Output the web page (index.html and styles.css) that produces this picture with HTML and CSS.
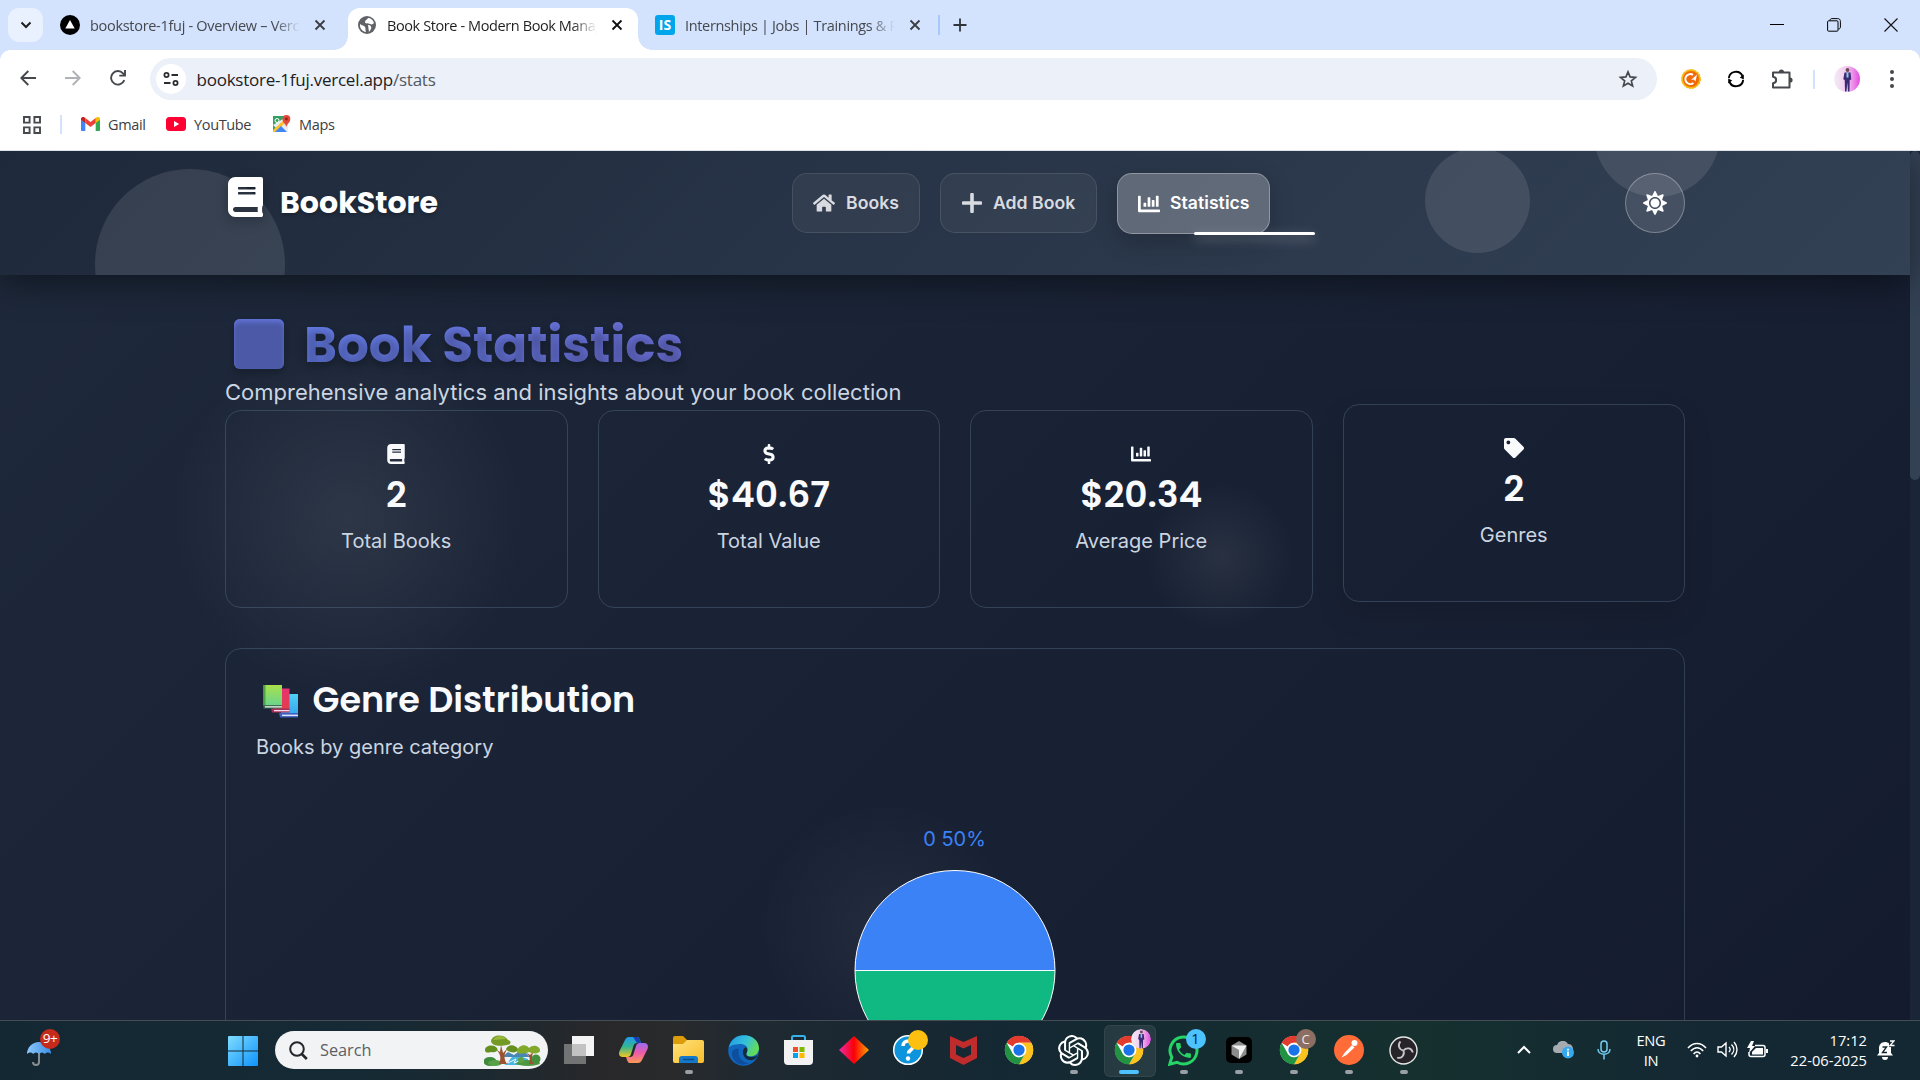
FILE: index.html
```html
<!DOCTYPE html>
<html lang="en">
<head>
<meta charset="utf-8">
<title>Book Store - Modern Book Management</title>
<link rel="stylesheet" href="styles.css">
</head>
<body>
<svg class="defs" aria-hidden="true">
  <defs>
    <linearGradient id="gWin" x1="0" y1="0" x2="1" y2="1"><stop offset="0" stop-color="#7fdcff"/><stop offset="1" stop-color="#0f93fb"/></linearGradient>
    <linearGradient id="gFold" x1="0" y1="0" x2="1" y2="1"><stop offset="0" stop-color="#ffe27a"/><stop offset="1" stop-color="#f8bd2c"/></linearGradient>
    <linearGradient id="gDia"><stop offset="0" stop-color="#ee2aa8"/><stop offset=".5" stop-color="#fb0006"/><stop offset="1" stop-color="#ffa600"/></linearGradient>
    <linearGradient id="gEdge" x1="0" y1="0" x2="1" y2=".4"><stop offset="0" stop-color="#1d9be6"/><stop offset=".6" stop-color="#35c1d8"/><stop offset="1" stop-color="#62dc5a"/></linearGradient>
    <linearGradient id="gCopA" x1="0" y1="0" x2="0" y2="1"><stop offset="0" stop-color="#1f9cf0"/><stop offset=".5" stop-color="#35b68e"/><stop offset="1" stop-color="#f7c821"/></linearGradient>
    <linearGradient id="gCopB" x1="0" y1="0" x2="0" y2="1"><stop offset="0" stop-color="#9a6cf5"/><stop offset=".5" stop-color="#ee5ba6"/><stop offset="1" stop-color="#fb9a55"/></linearGradient>
    <linearGradient id="gBookA" x1="0" y1="0" x2="0" y2="1"><stop offset="0" stop-color="#a9e04a"/><stop offset="1" stop-color="#6ad58e"/></linearGradient>
    <linearGradient id="gBookB" x1="0" y1="0" x2="0" y2="1"><stop offset="0" stop-color="#e8316f"/><stop offset="1" stop-color="#e33f4e"/></linearGradient>
    <linearGradient id="gBookC" x1="0" y1="0" x2="0" y2="1"><stop offset="0" stop-color="#4fd0f4"/><stop offset="1" stop-color="#36a4ee"/></linearGradient>
    <linearGradient id="gUmb"><stop offset="0" stop-color="#8cc8fb"/><stop offset="1" stop-color="#3c8fe6"/></linearGradient>
    <linearGradient id="gPink"><stop offset="0" stop-color="#f3edf5"/><stop offset=".5" stop-color="#f2c8f0"/><stop offset="1" stop-color="#e44be0"/></linearGradient>
    <symbol id="x" viewBox="0 0 12 12"><path d="M1.5 1.5l9 9M10.500 1.500l-9 9" stroke="currentColor" stroke-width="1.8" fill="none"/></symbol>
    <symbol id="book" viewBox="0 0 448 512"><path fill="currentColor" d="M448 360V24c0-13.300-10.700-24-24-24H96C43 0 0 43 0 96v320c0 53 43 96 96 96h328c13.300 0 24-10.700 24-24v-16c0-7.500-3.500-14.300-8.900-18.700-4.200-15.400-4.200-59.300 0-74.700 5.400-4.300 8.900-11.100 8.900-18.600zM128 134c0-3.300 2.700-6 6-6h212c3.300 0 6 2.700 6 6v20c0 3.300-2.700 6-6 6H134c-3.300 0-6-2.700-6-6v-20zm0 64c0-3.300 2.700-6 6-6h212c3.300 0 6 2.700 6 6v20c0 3.300-2.700 6-6 6H134c-3.300 0-6-2.700-6-6v-20zm253.400 250H96c-17.700 0-32-14.300-32-32 0-17.600 14.400-32 32-32h285.400c-1.900 17.100-1.900 46.900 0 64z"/></symbol>
    <symbol id="chart" viewBox="0 0 512 512"><path fill="currentColor" d="M332.800 320h38.400c6.400 0 12.800-6.400 12.800-12.800V172.800c0-6.400-6.400-12.800-12.800-12.800h-38.400c-6.400 0-12.800 6.400-12.800 12.800v134.400c0 6.400 6.400 12.800 12.800 12.800zm96 0h38.400c6.400 0 12.800-6.400 12.800-12.800V76.800c0-6.400-6.400-12.800-12.800-12.800h-38.400c-6.400 0-12.800 6.400-12.800 12.800v230.400c0 6.400 6.400 12.800 12.800 12.800zm-288 0h38.400c6.400 0 12.800-6.400 12.800-12.800v-70.400c0-6.400-6.400-12.800-12.800-12.800h-38.400c-6.400 0-12.800 6.400-12.800 12.800v70.400c0 6.400 6.400 12.800 12.800 12.800zm96 0h38.400c6.400 0 12.800-6.400 12.800-12.800V108.800c0-6.400-6.400-12.800-12.800-12.800h-38.400c-6.400 0-12.800 6.400-12.800 12.800v198.400c0 6.400 6.400 12.800 12.800 12.800zM496 384H64V80c0-8.840-7.160-16-16-16H16C7.160 64 0 71.160 0 80v336c0 17.670 14.330 32 32 32h464c8.840 0 16-7.160 16-16v-32c0-8.840-7.160-16-16-16z"/></symbol>
    <symbol id="chrome" viewBox="0 0 48 48">
      <circle cx="24" cy="24" r="22.500" fill="#fff"/>
      <path d="M24 1a23 23 0 0 1 19.900 11.500H24a11.500 11.500 0 0 0-10 5.800L4.100 12.500A23 23 0 0 1 24 1z" fill="#e33b2e"/>
      <path d="M43.900 12.500A23 23 0 0 1 24 47l10-17.250a11.500 11.500 0 0 0 0-11.500l-10-5.750z" fill="#fcc31e"/>
      <path d="M24 47A23 23 0 0 1 4.100 12.500L14 29.750a11.500 11.500 0 0 0 20 0z" fill="#229342"/>
      <circle cx="24" cy="24" r="11.500" fill="#fff"/><circle cx="24" cy="24" r="9" fill="#1a73e8"/>
    </symbol>
    <symbol id="avatar" viewBox="0 0 26 26">
      <circle cx="13" cy="13" r="13" fill="url(#gPink)"/>
      <circle cx="13.500" cy="4" r="1.900" fill="#6b4a55"/><path d="M10.500 6.500h6l.8 7-1.600.5-.2 11.500h-1.500l-.7-9-.8 9H11l-.3-11.500-1.400-.8z" fill="#3a2a72"/><path d="M12.500 6.500h2v5h-2z" fill="#8fc6ea"/>
    </symbol>
  </defs>
</svg>

<div class="browser">
  <div class="tabstrip">
    <button class="tab-search"><svg width="12" height="12" viewBox="0 0 12 12"><path d="M1.500 3.500L6 8l4.500-4.500" fill="none" stroke="#1f1f1f" stroke-width="2"/></svg></button>
    <div class="tab tab-first">
      <svg width="20" height="20" viewBox="0 0 20 20"><circle cx="10" cy="10" r="10" fill="#000"/><path d="M10 5l4.700 8.500H5.300z" fill="#fff"/></svg>
      <span class="tab-title t1">bookstore-1fuj - Overview – Vercel</span>
      <svg class="tab-x" width="12" height="12"><use href="#x"/></svg>
    </div>
    <div class="tab tab-active">
      <svg width="18" height="18" viewBox="0 0 18 18"><circle cx="9" cy="9" r="9" fill="#5f6368"/><path d="M2 8c2 2 4 1 5 3s0 3 1 5c-4-.5-6.500-4-6-8zM10 2c-1 2-3 2-3 4s3 1 5 2 3 0 4-1c-.8-3-3-5-6-5zM10 9c2 0 4 1 3 4l-2 3" fill="#fff"/></svg>
      <span class="tab-title t2">Book Store - Modern Book Management</span>
      <svg class="tab-x dark" width="12" height="12"><use href="#x"/></svg>
    </div>
    <div class="tab tab-last">
      <span class="favicon-is">IS</span>
      <span class="tab-title t3">Internships | Jobs | Trainings &amp; Placement</span>
      <svg class="tab-x" width="12" height="12"><use href="#x"/></svg>
    </div>
    <i class="tab-sep"></i>
    <svg class="new-tab" width="14" height="14" viewBox="0 0 14 14"><path d="M7 .5v13M.5 7h13" stroke="#30343a" stroke-width="1.800"/></svg>
    <div class="window-controls">
      <svg width="14" height="14" viewBox="0 0 14 14"><path d="M0 6.500h14" stroke="#000"/></svg>
      <svg width="14" height="14" viewBox="0 0 14 14" fill="none" stroke="#000"><rect x=".6" y="2.800" width="10.400" height="10.400" rx="1"/><path d="M3 2.500C3 1 4 .6 5 .6h5.500c2 0 2.900 1 2.900 2.900V9c0 1-.5 2-2 2"/></svg>
      <svg width="14" height="14" viewBox="0 0 14 14"><path d="M.5.5l13 13M13.500.5l-13 13" stroke="#111" stroke-width="1.100"/></svg>
    </div>
  </div>
  <div class="toolbar">
    <svg class="nav-ic" width="16" height="16" viewBox="0 0 16 16"><path d="M16 8H1.500M8.300 1L1.300 8l7 7" fill="none" stroke="#45484c" stroke-width="1.900"/></svg>
    <svg class="nav-ic" width="16" height="16" viewBox="0 0 16 16"><path d="M0 8h14.500M7.700 1l7 7-7 7" fill="none" stroke="#b0b1b4" stroke-width="1.900"/></svg>
    <svg class="nav-ic" width="16" height="16" viewBox="0 0 16 16"><path d="M14.300 10.200A6.800 6.800 0 1 1 13 3.300l1.500 1.700M15 0v5.600H9.300" fill="none" stroke="#45484c" stroke-width="1.900"/></svg>
    <div class="omnibox">
      <span class="site-info"><svg width="16" height="16" viewBox="0 0 16 16" fill="none" stroke="#2b2d30" stroke-width="1.800"><circle cx="3.500" cy="4" r="2.100"/><path d="M8.500 4H15M1 12h6.500"/><circle cx="12.500" cy="12" r="2.100"/></svg></span>
      <span class="url">bookstore-1fuj.vercel.app<em>/stats</em></span>
      <svg width="20" height="20" viewBox="0 0 24 24"><path d="M12 3.500l2.500 6 6.500.5-5 4.200 1.600 6.300L12 17.100l-5.600 3.400L8 14.200 3 10l6.500-.5z" fill="none" stroke="#45484c" stroke-width="2"/></svg>
    </div>
    <div class="extensions">
      <svg width="20" height="20" viewBox="0 0 20 20"><circle cx="10" cy="10" r="9.500" fill="#f3b912" stroke="#f3b912" stroke-dasharray="2 1"/><circle cx="10" cy="10" r="8" fill="#f06a0c"/><path d="M12 5.800A5 5 0 1 0 12.500 14" fill="none" stroke="#fff" stroke-width="2"/><path d="M10 11l6-5.500-1.500 7-1.700-2z" fill="#fff"/></svg>
      <svg width="18" height="18" viewBox="0 0 18 18" fill="none" stroke="#000" stroke-width="1.900"><path d="M1.800 8A7.200 7.200 0 0 1 15.500 6M16.200 10A7.200 7.200 0 0 1 2.500 12"/><path d="M16.800 4.500v5l-4-2zM1.200 13.500v-5l4 2z" fill="#000" stroke="none"/></svg>
      <svg width="23" height="23" viewBox="0 0 23 23"><path d="M2 4.500h16.500v15H2v-4.300c4.200-.5 4.200-6 0-6.500z" fill="none" stroke="#45484c" stroke-width="2" stroke-linejoin="round"/><path d="M7.800 4a2.600 2.600 0 0 1 5.200 0zM19 9.400a2.600 2.600 0 0 1 0 5.200z" fill="#45484c"/></svg>
      <i class="tool-sep"></i>
      <svg class="av" width="26" height="26"><use href="#avatar"/></svg>
      <svg width="4" height="18" viewBox="0 0 4 18" fill="#45484c"><circle cx="2" cy="2" r="2"/><circle cx="2" cy="9" r="2"/><circle cx="2" cy="16" r="2"/></svg>
    </div>
  </div>
  <div class="bookmarks">
    <svg class="apps" width="18" height="18" viewBox="0 0 18 18" fill="none" stroke="#45484c" stroke-width="1.900"><path d="M1 1h5.600v5.600H1zM11.400 1H17v5.600h-5.600zM1 11.400h5.600V17H1zM11.400 11.400H17V17h-5.600z"/></svg>
    <i class="tool-sep"></i>
    <span class="bm gm"><svg width="19" height="14" viewBox="0 0 19 14"><path d="M0 2v11c0 .6.400 1 1 1h3.300V5.500z" fill="#4285f4"/><path d="M14.700 14H18c.6 0 1-.4 1-1V2l-4.300 3.500z" fill="#34a853"/><path d="M14.700 1v5L19 2.800V2c0-2-2.200-2.500-3.300-1.700z" fill="#fbbc04"/><path d="M4.300 6V1l5.200 4 5.200-4v5L9.500 10z" fill="#ea4335"/><path d="M0 2v.8L4.300 6V1L3.300.3C2.200-.5 0 0 0 2z" fill="#c5221f"/></svg>Gmail</span>
    <span class="bm yt"><svg width="20" height="14" viewBox="0 0 20 14"><rect width="20" height="14" rx="3.500" fill="#ff0033"/><path d="M8 4l5.200 3L8 10z" fill="#fff"/></svg>YouTube</span>
    <span class="bm mp"><svg width="19" height="18" viewBox="0 0 19 18"><path d="M1 1h15v16H1z" fill="#34a061"/><path d="M16 1v16H8L1 10z" fill="#e9edf0"/><path d="M1 15L14 3l2 2L4 17H1z" fill="#fbc02d"/><path d="M3 17l6-6 6 6z" fill="#4285f4"/><circle cx="5" cy="5.500" r="2" fill="none" stroke="#fff"/><path d="M14.300 12C13.500 8.500 10.500 7.500 10.500 4a3.900 3.900 0 0 1 7.800 0c0 3.500-3.200 4.500-4 8z" fill="#e4483b"/><circle cx="14.400" cy="4" r="1.400" fill="#8c1f18"/></svg>Maps</span>
  </div>
</div>

<div class="viewport">
  <div class="glow g1"></div><div class="glow g2"></div><div class="glow g3"></div>
  <div class="page">
    <header class="site-header">
      <div class="bubbles"><i class="b1"></i><i class="b2"></i><i class="b3"></i></div>
      <div class="header-row">
        <div class="logo"><svg width="35" height="40"><use href="#book"/></svg><span>BookStore</span></div>
        <nav class="nav">
          <a class="nav-books"><svg width="22" height="20" viewBox="0 0 576 512"><path fill="currentColor" d="M280.370 148.260L96 300.110V464a16 16 0 0 0 16 16l112.060-.29a16 16 0 0 0 15.920-16V368a16 16 0 0 1 16-16h64a16 16 0 0 1 16 16v95.640a16 16 0 0 0 16 16.050L464 480a16 16 0 0 0 16-16V300L295.670 148.260a12.190 12.190 0 0 0-15.300 0zM571.600 251.470L488 182.560V44.050a12 12 0 0 0-12-12h-56a12 12 0 0 0-12 12v72.610L318.470 43a48 48 0 0 0-61 0L4.340 251.470a12 12 0 0 0-1.600 16.900l25.500 31A12 12 0 0 0 45.150 301l235.220-193.740a12.190 12.190 0 0 1 15.300 0L530.900 301a12 12 0 0 0 16.900-1.600l25.500-31a12 12 0 0 0-1.700-16.930z"/></svg><span>Books</span></a>
          <a class="nav-add"><svg width="20" height="20" viewBox="0 0 20 20"><path d="M10 1.500v17M1.500 10h17" stroke="currentColor" stroke-width="3.600" stroke-linecap="round"/></svg><span>Add Book</span></a>
          <a class="nav-stats active"><svg width="22" height="22"><use href="#chart"/></svg><span>Statistics</span><i class="underline"></i></a>
        </nav>
        <button class="theme"><svg width="24" height="24" viewBox="0 0 512 512"><path fill="#fff" d="M256 160c-52.900 0-96 43.100-96 96s43.100 96 96 96 96-43.100 96-96-43.100-96-96-96zm246.400 80.500l-94.700-47.300 33.500-100.400c4.500-13.600-8.400-26.500-21.900-21.900l-100.400 33.500-47.400-94.800c-6.400-12.800-24.600-12.800-31 0l-47.300 94.700L92.700 70.800c-13.600-4.500-26.500 8.400-21.900 21.900l33.500 100.400-94.700 47.400c-12.800 6.400-12.800 24.600 0 31l94.700 47.300-33.500 100.500c-4.500 13.600 8.400 26.500 21.900 21.900l100.400-33.500 47.300 94.700c6.400 12.800 24.600 12.800 31 0l47.300-94.700 100.400 33.500c13.600 4.500 26.500-8.400 21.900-21.900l-33.500-100.400 94.700-47.300c13-6.500 13-24.700.2-31.100zm-155.900 106c-49.900 49.900-131.100 49.900-181 0-49.900-49.900-49.900-131.100 0-181 49.900-49.900 131.100-49.900 181 0 49.900 49.900 49.900 131.100 0 181z"/></svg></button>
      </div>
    </header>
    <main class="content">
      <div class="title-row"><i class="title-box"></i><h1>Book Statistics</h1></div>
      <p class="lead">Comprehensive analytics and insights about your book collection</p>
      <section class="cards">
        <article class="card"><svg width="20" height="20"><use href="#book"/></svg><b>2</b><span class="l1">Total Books</span></article>
        <article class="card"><svg width="12" height="20" viewBox="0 0 288 512"><path fill="currentColor" d="M209.200 233.400l-108-31.600C88.700 198.200 80 186.500 80 173.500c0-16.300 13.200-29.500 29.500-29.500h66.300c12.200 0 24.200 3.700 34.200 10.500 6.100 4.100 14.300 3.100 19.500-2l34.800-34c7.100-6.900 6.100-18.400-1.800-24.500C238 74.800 207.400 64.100 176 64V16c0-8.800-7.200-16-16-16h-32c-8.800 0-16 7.200-16 16v48h-2.500C45.800 64-5.400 118.700.5 183.600c4.200 46.100 39.400 83.600 83.800 96.600l102.500 30c12.500 3.700 21.200 15.300 21.200 28.300 0 16.300-13.200 29.500-29.500 29.500h-66.300C100 368 88 364.300 78 357.500c-6.100-4.100-14.300-3.100-19.500 2l-34.800 34c-7.100 6.900-6.100 18.400 1.800 24.500 24.500 19.200 55.100 29.900 86.500 30v48c0 8.800 7.200 16 16 16h32c8.800 0 16-7.200 16-16v-48.200c46.600-.9 90.300-28.600 105.700-72.700 21.500-61.600-14.600-124.800-72.500-141.700z"/></svg><b>$40.67</b><span>Total Value</span></article>
        <article class="card"><svg width="20" height="20"><use href="#chart"/></svg><b>$20.34</b><span>Average Price</span></article>
        <article class="card raised"><svg width="20" height="20" viewBox="0 0 512 512"><path fill="currentColor" d="M0 252.118V48C0 21.490 21.490 0 48 0h204.118a48 48 0 0 1 33.941 14.059l211.882 211.882c18.745 18.745 18.745 49.137 0 67.882L293.823 497.941c-18.745 18.745-49.137 18.745-67.882 0L14.059 286.059A48 48 0 0 1 0 252.118zM112 64c-26.510 0-48 21.490-48 48s21.490 48 48 48 48-21.490 48-48-21.490-48-48-48z"/></svg><b>2</b><span>Genres</span></article>
      </section>
      <section class="genre">
        <div class="genre-head">
          <svg width="36" height="33" viewBox="0 0 36 33"><path d="M18 9h17v22H18z" fill="url(#gBookC)"/><path d="M16 28h19v4.500H17z" fill="#3b5fc0"/><path d="M19 29.600h16v1.500H19z" fill="#dfe3f6"/><path d="M10 3.500h16.500v21H10z" fill="url(#gBookB)"/><path d="M8 23.500h18.500v4H9z" fill="#a92c5c"/><path d="M11 25h15.500v1.300H11z" fill="#f4dbe8"/><path d="M.5 0H19v20.500H.5z" fill="url(#gBookA)"/><path d="M.5 0h2v21h-2z" fill="#4fa345"/><path d="M.5 20H19v3.500H.5z" fill="#3f6d53"/><path d="M2 21.200h17v1.300H2z" fill="#e6eee8"/></svg>
          <h2>Genre Distribution</h2>
        </div>
        <p>Books by genre category</p>
        <svg class="pie" width="240" height="290" viewBox="0 0 240 290" stroke="#fff">
          <path d="M20 150.500a100 100 0 0 1 200 0z" fill="#3b82f6"/><path d="M20 150.500a100 100 0 0 0 200 0z" fill="#10b981"/>
          <text x="119.500" y="26" text-anchor="middle" stroke="none">0 50%</text>
        </svg>
      </section>
    </main>
  </div>
  <div class="scrollbar"><i></i></div>
</div>

<footer class="taskbar">
  <div class="weather"><svg width="34" height="36" viewBox="0 0 34 36"><path d="M12 14v15a3 3 0 0 1-6 0" fill="none" stroke="#888d91" stroke-width="2"/><path d="M0 21a12 12 0 0 1 24 0c-2-2-5-2-6 0-2-2-4-2-6 0-2-2-4-2-6 0-1-2-4-2-6 0z" fill="url(#gUmb)"/></svg><span>9+</span></div>
  <svg class="start" width="30" height="30" viewBox="0 0 30 30" fill="url(#gWin)"><path d="M1 0h13.500v14.500H0V1a1 1 0 0 1 1-1zM15.500 0H29a1 1 0 0 1 1 1v13.500H15.500zM0 15.500h14.500V30H1a1 1 0 0 1-1-1zM15.500 15.500H30V29a1 1 0 0 1-1 1H15.500z"/></svg>
  <div class="search">
    <svg width="19" height="19" viewBox="0 0 19 19" fill="none" stroke="#23272c" stroke-width="2"><circle cx="8" cy="8" r="6.800"/><path d="M12.800 13l5 5" stroke-width="2.600"/></svg>
    <span>Search</span>
    <svg class="trees" width="57" height="31" viewBox="0 0 57 31"><path d="M20 30c8-4 4-7 12-10l12 4v6z" fill="#48b4e0"/><path d="M18 22l6-5 6 3 8-6 8 8z" fill="#4a86b4"/><ellipse cx="6" cy="26.500" rx="6.500" ry="4.500" fill="#3f8a3b"/><ellipse cx="11" cy="28" rx="7" ry="3" fill="#58a046"/><ellipse cx="44" cy="28" rx="12" ry="3" fill="#4d9743"/><path d="M15 29c3-7 1-12-5-16l6 4 1-7 2 8 5-5c-5 7-4 11-1 16z" fill="#9c5230"/><path d="M45 29c2-5 0-9-3-12l4 3 4-4c-3 5-2 9 0 13z" fill="#9c5230"/><path d="M7 6c2-7 13-7 17-1 4 1 3 5-1 5-5 1-15 2-16-4z" fill="#739a24"/><path d="M1 15c0-5 9-6 12-2 2 3-2 5-6 4-3 1-6 1-6-2zM22 14c2-5 9-5 12 0 1 4-9 5-12 0z" fill="#65901f"/><path d="M9 5c3-5 10-5 13-1z" fill="#98b93c"/><path d="M33 16c1-6 9-8 12-3 5-5 12-1 11 3-2 4-9 2-11 1-5 2-12 3-12-1z" fill="#82a82c"/><path d="M24 28l8-4-2 4 8-3" stroke="#e8f8ff" fill="none"/><circle cx="52" cy="24" r="4.500" fill="#45903e"/><circle cx="37" cy="25" r="3" fill="#5fa23f"/></svg>
  </div>
  <div class="apps-row">
    <span class="app"><svg width="30" height="28" viewBox="0 0 30 28"><path d="M8 0h22v20H8z" fill="#f4f4f4"/><path d="M0 8h22v20H0z" fill="#8c8c8c" fill-opacity=".75"/><path d="M8 8h14v12H8z" fill="#c2c2c2"/></svg></span>
    <span class="app"><svg width="29" height="26" viewBox="0 0 29 26"><path d="M6 3C7 1 8 0 10 0h8c2 0 2 1 3 3l1 3h-4c-2 0-3 1-3.500 3L12 17c-.6 2-1.500 3-4 3H4c-4 0-4.500-3-3.500-6z" fill="url(#gCopA)"/><path d="M23 23c-1 2-2 3-4 3h-8c-2 0-2-1-3-3l-1-3h4c2 0 3-1 3.500-3L17 9c.6-2 1.500-3 4-3h4c4 0 4.500 3 3.500 6z" fill="url(#gCopB)"/><path d="M14 0h4c2 0 2 1 3 3l1 3h-4z" fill="#1741b0"/></svg></span>
    <span class="app"><svg width="31" height="28" viewBox="0 0 31 28"><path d="M0 2a2 2 0 0 1 2-2h8l4 4h14v6H0z" fill="#dd9c0a"/><path d="M0 8h10l4-4h15a2 2 0 0 1 2 2v19a2 2 0 0 1-2 2H2a2 2 0 0 1-2-2z" fill="url(#gFold)"/><path d="M6 27v-4a3 3 0 0 1 3-3h13a3 3 0 0 1 3 3v4z" fill="#1578c8"/><path d="M10 23.500h11" stroke="#0a4d8c" stroke-width="1.500"/></svg><i></i></span>
    <span class="app"><svg width="31" height="31" viewBox="0 0 31 31"><circle cx="15.500" cy="15.500" r="15.300" fill="#1067bd"/><path d="M1 12C3 4 9 .2 16 .2c9 0 15 6 15 13 0 5-4 8-8 8-5 0-5-2-4-4 3-7-5-9-9-8-4 0-7 1-9 3z" fill="url(#gEdge)"/><path d="M19 17c-2 3 0 5 5 5 2 0 4-1 5.500-2-2 6-8 6-11 4-4-3-5-9-1-12 2 1 2 3 1.500 5z" fill="#152b39"/><path d="M11 14c-2 8 3 13 10 14-9 5-18-2-17-11 1-2 4-4 7-3z" fill="#0d4e9e"/></svg></span>
    <span class="app"><svg width="29" height="30" viewBox="0 0 29 30"><path d="M8 7V2.500Q8 1 9.500 1h10Q21 1 21 2.500V7" fill="none" stroke="#35b2ea" stroke-width="2"/><path d="M0 5h29v21a4 4 0 0 1-4 4H4a4 4 0 0 1-4-4z" fill="#f2f2f2"/><path d="M9 12h5v5H9z" fill="#f15122"/><path d="M15.500 12h5v5h-5z" fill="#7eba00"/><path d="M9 18h5v5H9z" fill="#00a3ee"/><path d="M15.500 18h5v5h-5z" fill="#ffb900"/></svg></span>
    <span class="app"><svg width="30" height="30" viewBox="0 0 30 30"><path d="M15 1l15 14-15 14L0 15z" fill="url(#gDia)"/></svg></span>
    <span class="app help"><svg width="36" height="36" viewBox="0 0 36 36"><circle cx="16" cy="20" r="14.300" fill="#0e94dc" stroke="#fff" stroke-width="1.500"/><path d="M11 16c0-7 11-6.500 11-.5 0 4-5.500 4-5.500 8" fill="none" stroke="#fff" stroke-width="3.500"/><circle cx="16" cy="28.500" r="2.200" fill="#fff"/><circle cx="26" cy="10" r="10" fill="#fdc010"/></svg></span>
    <span class="app"><svg width="27" height="30" viewBox="0 0 27 30"><path d="M0 1l13.500 6L27 1v22l-13.500 7L0 23zM6 10v9.500l7.500 3.500 7.500-3.500V10l-7.500 3.500z" fill="#c02b2b" fill-rule="evenodd"/></svg></span>
    <span class="app"><svg width="30" height="30"><use href="#chrome"/></svg></span>
    <span class="app"><svg width="31" height="31" viewBox="0 0 24 24"><path fill="#fff" d="M22.2819 9.8211a5.9847 5.9847 0 0 0-.5157-4.9108 6.0462 6.0462 0 0 0-6.5098-2.9A6.0651 6.0651 0 0 0 4.9807 4.1818a5.9847 5.9847 0 0 0-3.9977 2.9 6.0462 6.0462 0 0 0 .7427 7.0966 5.98 5.98 0 0 0 .511 4.9107 6.051 6.051 0 0 0 6.5146 2.9001A5.9847 5.9847 0 0 0 13.2599 24a6.0557 6.0557 0 0 0 5.7718-4.2058 5.9894 5.9894 0 0 0 3.9977-2.9001 6.0557 6.0557 0 0 0-.7475-7.0729zm-9.022 12.6081a4.4755 4.4755 0 0 1-2.8764-1.0408l.1419-.0804 4.7783-2.7582a.7948.7948 0 0 0 .3927-.6813v-6.7369l2.02 1.1686a.071.071 0 0 1 .038.052v5.5826a4.504 4.504 0 0 1-4.4945 4.4944zm-9.6607-4.1254a4.4708 4.4708 0 0 1-.5346-3.0137l.142.0852 4.783 2.7582a.7712.7712 0 0 0 .7806 0l5.8428-3.3685v2.3324a.0804.0804 0 0 1-.0332.0615L9.740 19.9502a4.4992 4.4992 0 0 1-6.1408-1.6464zM2.3408 7.8956a4.485 4.485 0 0 1 2.3655-1.9728V11.600a.7664.7664 0 0 0 .3879.6765l5.8144 3.3543-2.0201 1.1685a.0757.0757 0 0 1-.071 0l-4.8303-2.7865A4.504 4.504 0 0 1 2.3408 7.872zm16.5963 3.8558L13.1038 8.364 15.1192 7.200a.0757.0757 0 0 1 .071 0l4.8303 2.7913a4.4944 4.4944 0 0 1-.6765 8.1042v-5.6772a.79.79 0 0 0-.407-.667zm2.0107-3.0231l-.142-.0852-4.7735-2.7818a.7759.7759 0 0 0-.7854 0L9.409 9.2297V6.8974a.0662.0662 0 0 1 .0284-.0615l4.8303-2.7866a4.4992 4.4992 0 0 1 6.6802 4.66zM8.3065 12.863l-2.02-1.1638a.0804.0804 0 0 1-.038-.0567V6.0742a4.4992 4.4992 0 0 1 7.3757-3.4537l-.142.0805L8.704 5.459a.7948.7948 0 0 0-.3927.6813zm1.0976-2.3654l2.602-1.4998 2.6069 1.4998v2.9994l-2.5974 1.4997-2.6067-1.4997Z"/></svg><i></i></span>
    <span class="app current"><svg width="30" height="30"><use href="#chrome"/></svg><svg class="badge" width="20" height="20"><use href="#avatar"/></svg><i></i></span>
    <span class="app"><svg width="31" height="31" viewBox="0 0 31 31"><path d="M1.800 29.200l2-7A13.500 13.500 0 1 1 9 27.300z" fill="none" stroke="#25d366" stroke-width="3"/><path transform="translate(5.500 5.500) scale(.83)" d="M6.620 10.790c1.440 2.830 3.760 5.140 6.590 6.590l2.200-2.200c.27-.27.67-.36 1.020-.24 1.120.37 2.330.57 3.570.57.55 0 1 .45 1 1V20c0 .55-.45 1-1 1-9.390 0-17-7.610-17-17 0-.55.45-1 1-1h3.500c.55 0 1 .45 1 1 0 1.250.2 2.450.57 3.570.11.35.03.74-.25 1.020l-2.200 2.200z" fill="#25d366"/></svg><span class="badge blue">1</span><i></i></span>
    <span class="app"><svg width="26" height="26" viewBox="0 0 26 26"><rect width="26" height="26" rx="5" fill="#000"/><path d="M13 4l7.500 4.500v9L13 22l-7.500-4.500v-9z" fill="#8c8c8c"/><path d="M5.500 8.500h15L13 22v-9z" fill="#f2f2f2"/></svg><i></i></span>
    <span class="app"><svg width="30" height="30"><use href="#chrome"/></svg><span class="badge brown">C</span><i></i></span>
    <span class="app"><svg width="30" height="30" viewBox="0 0 30 30"><circle cx="15" cy="15" r="15" fill="#ff6c37"/><circle cx="20.500" cy="8" r="3" fill="#fff"/><path d="M18 10l2.500 2.500-8 7.500-5 2.500 3-4.500z" fill="#fff"/></svg><i></i></span>
    <span class="app"><svg width="29" height="29" viewBox="0 0 29 29"><circle cx="14.500" cy="14.500" r="13.500" fill="#262428" stroke="#e8e8e8" stroke-width="1.400"/><g fill="none" stroke="#c6c4c8" stroke-width="1.800"><path d="M14.500 14.500c-5-1-6-6-3-9"/><path transform="rotate(120 14.500 14.500)" d="M14.500 14.500c-5-1-6-6-3-9"/><path transform="rotate(240 14.500 14.500)" d="M14.500 14.500c-5-1-6-6-3-9"/></g></svg><i></i></span>
  </div>
  <div class="tray">
    <svg class="chev" width="14" height="9" viewBox="0 0 14 9"><path d="M1 8l6-6 6 6" fill="none" stroke="#fff" stroke-width="2"/></svg>
    <svg class="cloud" width="22" height="18" viewBox="0 0 22 18"><path d="M4 12a4 4 0 0 1 0-8 6 6 0 0 1 11-1 5 5 0 0 1 3 9z" fill="#a5abb0"/><circle cx="15" cy="11.500" r="6" fill="#36a9ee"/><path d="M15 10.500v4.500M15 7.800v1.600" stroke="#fff" stroke-width="1.700"/></svg>
    <svg class="mic" width="14" height="20" viewBox="0 0 14 20" fill="none" stroke="#76cdf0" stroke-width="1.500"><rect x="4" y="1" width="6" height="11" rx="3"/><path d="M1 9c0 7 12 7 12 0M7 14.500V19.500"/></svg>
    <span class="lang">ENG<br>IN</span>
    <svg class="wifi" width="20" height="16" viewBox="0 0 20 16" fill="none" stroke="#fff" stroke-width="1.500"><path d="M1 6c5-6 13-6 18 0M3.800 9c4-4.500 8.600-4.500 12.400 0M6.600 12c2-2.700 4.800-2.700 6.800 0"/><circle cx="10" cy="14" r="1.400" fill="#fff" stroke="none"/></svg>
    <svg class="vol" width="21" height="17" viewBox="0 0 21 17" fill="none" stroke="#fff" stroke-width="1.400"><path d="M1 6h3.500l4.500-4v13l-4.500-4H1zM12 6c1.500 1.500 1.500 3.500 0 5M14.500 3.500c3 3 3 7 0 10M17 1c4 4.500 4 10.500 0 15"/></svg>
    <svg class="bat" width="21" height="17" viewBox="0 0 21 17"><path d="M8 4.500h8a2 2 0 0 1 2 2v7a2 2 0 0 1-2 2H4a2 2 0 0 1-2-2V11" fill="none" stroke="#fff" stroke-width="1.500"/><path d="M5 13.500V11l4-4h7v6.500zM19 8h2v4h-2zM4 0L0 7h3l-1 5 6-7H5l2-5z" fill="#fff"/></svg>
    <span class="clock">17:12<br>22-06-2025</span>
    <svg class="bell" width="18" height="20" viewBox="0 0 18 20"><path d="M8 2c3 0 6 2 6 6v5l2 2.500H0L2 13V8c0-3 2-6 6-6zM5 17h6a3 3 0 0 1-6 0z" fill="#fff"/><path d="M5.500 7h4l-4 5.500h4.500" fill="none" stroke="#142833" stroke-width="1.400"/><path d="M12 0h6v7h-6z" fill="#142833"/><path d="M13 1h4l-4 4.500h4.500" fill="none" stroke="#fff" stroke-width="1.300"/></svg>
  </div>
</footer>
</body>
</html>
```
FILE: styles.css
```css
* { box-sizing: border-box; }
body {
  margin: 0; width: 1920px; height: 1080px; overflow: hidden;
  display: flex; flex-direction: column;
  font-family: "Inter", "Liberation Sans", sans-serif; background: #1a2436;
}
svg { display: block; flex: none; }
button { border: 0; padding: 0; margin: 0; font: inherit; }
h1, h2, p { margin: 0; }
.defs { position: absolute; width: 0; height: 0; }

/* browser chrome */
.browser { height: 151px; background: #fff; border-bottom: 1px solid #dde3e8; font-family: "Segoe UI", "Open Sans", sans-serif; flex: none; }
.tabstrip { height: 50px; background: #d3e2fd; display: flex; align-items: center; }
.tab-search { width: 35px; height: 34px; margin-left: 8px; border-radius: 11px; background: #e9f0fe; display: flex; align-items: center; justify-content: center; }
.tab { display: flex; align-items: center; height: 50px; flex: none; }
.tab-first { width: 305px; padding-left: 17px; }
.tab-title { margin-left: 10px; width: 210px; overflow: hidden; white-space: nowrap; font-size: 14.500px; color: #45494e; -webkit-mask-image: linear-gradient(90deg, #000 88%, transparent); mask-image: linear-gradient(90deg, #000 88%, transparent); }
.t1 { letter-spacing: -.3px; }
.t2 { letter-spacing: -.4px; }
.t3 { letter-spacing: -.34px; }
.tab-x { margin-left: 14px; color: #3a3d41; }
.tab-x.dark { color: #111; }
.tab-active { position: relative; width: 290px; height: 42px; align-self: flex-end; background: #fff; border-radius: 12px 12px 0 0; padding: 0 0 8px 10px; }
.tab-active .tab-title { margin-left: 11px; color: #1f1f1f; }
.tab-active::before, .tab-active::after { content: ""; position: absolute; bottom: 0; width: 14px; height: 14px; }
.tab-active::before { left: -14px; background: radial-gradient(circle at 0 0, transparent 13.500px, #fff 14px); }
.tab-active::after { right: -14px; background: radial-gradient(circle at 100% 0, transparent 13.500px, #fff 14px); }
.tab-last { width: 299px; padding-left: 17px; }
.favicon-is { width: 20px; height: 20px; border-radius: 3px; background: #00a5ec; color: #fff; font: 700 14px/20px "Open Sans", sans-serif; text-align: center; flex: none; }
.tab-sep { width: 2px; height: 20px; background: #a8c7fa; margin-left: 1px; }
.new-tab { margin-left: 13px; }
.window-controls { margin-left: auto; display: flex; gap: 43px; padding-right: 22px; }
.toolbar { height: 58px; background: radial-gradient(circle at 10px 10px, #fff 9.500px, #d3e2fd 10px) 0 0 / 10px 10px no-repeat, radial-gradient(circle at 0 10px, #fff 9.500px, #d3e2fd 10px) 100% 0 / 10px 10px no-repeat, #fff; display: flex; align-items: center; padding-left: 20px; }
.nav-ic { margin: 0 29px 2px 0; }
.omnibox { width: 1511px; height: 42px; border-radius: 21px; background: #ebf0f9; display: flex; align-items: center; padding: 0 19px 0 6px; margin-left: -5px; }
.site-info { width: 30px; height: 30px; border-radius: 50%; background: #fff; display: flex; align-items: center; justify-content: center; }
.url { flex: 1; margin-left: 10.500px; font-size: 17px; letter-spacing: -.24px; color: #1f2023; }
.url em { font-style: normal; color: #55585d; }
.extensions { display: flex; align-items: center; margin-left: 24px; }
.extensions svg { margin-right: 26px; }
.extensions .tool-sep { margin-left: -7px; margin-right: 19px; }
.extensions .av { margin-right: 30px; }
.tool-sep { width: 2px; height: 19px; background: #d3e2fd; }
.bookmarks { height: 33px; display: flex; align-items: center; padding-left: 23px; font-size: 14.500px; color: #3c4043; }
.bookmarks .tool-sep { margin: 0 19px 0 19px; }
.bm { display: flex; align-items: center; gap: 8px; letter-spacing: -.35px; padding-bottom: 1px; }
.gm { width: 85px; } .yt { width: 106px; } .mp { width: 80px; }

/* viewport */
.viewport { position: relative; flex: none; height: 869px; display: flex; overflow: hidden; background: linear-gradient(135deg, #1e293b 0%, #141b2e 100%); }
.page { width: 1910px; position: relative; }
.scrollbar { width: 10px; background: #1a2638; }
.scrollbar i { display: block; height: 329px; border-radius: 5px; background: #334155; }
.glow { position: absolute; border-radius: 50%; }
.g1 { left: 169px; top: 187px; width: 360px; height: 360px; background: radial-gradient(circle, rgba(255,255,255,.08), transparent 70%); }
.g2 { left: 1146px; top: 331px; width: 150px; height: 150px; background: radial-gradient(circle, rgba(255,255,255,.07), transparent 70%); }
.g3 { left: 758px; top: 649px; width: 260px; height: 260px; background: radial-gradient(circle, rgba(255,255,255,.05), transparent 70%); }
.site-header { position: relative; height: 124px; padding: 22px 225px 0; background: linear-gradient(135deg, #1e293b, #334155); box-shadow: 0 8px 32px rgba(0,0,0,.45); }
.bubbles { position: absolute; inset: 0; overflow: hidden; }
.bubbles i { position: absolute; border-radius: 50%; background: rgba(255,255,255,.1); }
.b1 { left: 95px; top: 18px; width: 190px; height: 190px; }
.b2 { left: 1425px; top: -3px; width: 105px; height: 105px; }
.b3 { left: 1594px; top: -80px; width: 126px; height: 126px; }
.header-row { position: relative; display: flex; align-items: flex-start; height: 60px; }
.logo { display: flex; align-items: flex-start; width: 567px; color: #fff; padding: 4px 0 0 2.500px; font: 700 30px/40px "Poppins", "Inter", sans-serif; }
.logo svg { filter: drop-shadow(0 4px 6px rgba(0,0,0,.3)); }
.logo span { margin: 6px 0 0 17.500px; letter-spacing: .05px; text-shadow: 0 2px 4px rgba(0,0,0,.3); white-space: nowrap; }
.nav { display: flex; gap: 20px; flex: 1; }
.nav a { position: relative; display: flex; align-items: center; height: 60px; padding-left: 20px; border: 1px solid rgba(255,255,255,.1); border-radius: 15px; background: rgba(255,255,255,.05); color: #d9dbe0; font-weight: 600; font-size: 17.600px; letter-spacing: .05px; }
.nav span { margin-left: 11px; padding-bottom: 2px; white-space: nowrap; }
.nav .nav-books { width: 128px; }
.nav .nav-add { width: 157px; padding-left: 21px; }
.nav .nav-stats { width: 153px; height: 61px; color: #fff; background: rgba(255,255,255,.25); border-color: rgba(255,255,255,.3); box-shadow: 0 8px 25px rgba(0,0,0,.2); }
.nav .nav-stats span { margin-left: 10px; }
.nav .underline { position: absolute; left: 76px; bottom: -2px; width: 121px; height: 3px; border-radius: 2px; background: #fff; box-shadow: 0 4px 12px rgba(255,255,255,.4); }
.theme { width: 60px; height: 60px; border-radius: 50%; border: 1px solid rgba(255,255,255,.3); background: rgba(255,255,255,.1); display: flex; align-items: center; justify-content: center; }
.content { padding: 33px 225px 0; }
.title-row { display: flex; height: 71px; align-items: center; padding: 1px 0 0 9px; }
.title-box { width: 50px; height: 50px; border-radius: 6px; background: #4b59a6; box-shadow: inset 0 4px 5px -1px #6374da, inset 0 0 2px #5767c4, 0 4px 6px rgba(0,0,0,.2); margin-right: 20px; }
h1 { flex: 1; font: 700 50px/64px "Poppins", "Inter", sans-serif; padding-top: 2px; background: linear-gradient(100deg, #667eea, #764ba2); -webkit-background-clip: text; background-clip: text; color: transparent; text-shadow: 0 4px 8px rgba(0,0,0,.3); white-space: nowrap; }
.lead { height: 31px; font-size: 22px; line-height: 26px; color: #cbd5e1; white-space: nowrap; }
.cards { display: grid; grid-template-columns: repeat(4, 1fr); gap: 30px; }
.card { height: 198px; border: 1px solid rgba(120,150,180,.28); border-radius: 16px; display: flex; flex-direction: column; align-items: center; padding-top: 33px; color: #f8fafc; }
.card b { font: 600 36px/44px "Poppins", "Inter", sans-serif; margin-top: 9px; }
.card span { font-size: 20px; line-height: 26px; margin-top: 11px; color: #cbd5e1; }
.raised { position: relative; top: -6px; box-shadow: 0 12px 30px rgba(0,0,0,.12); }
.genre { margin-top: 40px; height: 500px; border: 1px solid rgba(120,150,180,.28); border-radius: 16px; padding: 36px 30px 0; }
.genre-head { display: flex; height: 34px; align-items: flex-start; padding-left: 7px; }
h2 { font: 600 35px/34px "Poppins", "Inter", sans-serif; color: #f8fafc; margin-left: 13.500px; margin-top: -2px; white-space: nowrap; }
.genre p { font-size: 20px; line-height: 26px; color: #cbd5e1; margin-top: 15px; }
.pie { margin: 60px 0 0 579px; }
.pie text { font-size: 20px; fill: #3b82f6; }

/* taskbar */
.taskbar { height: 60px; flex: none; border-top: 1px solid #454d55; display: flex; align-items: center; font-family: "Segoe UI", "Open Sans", sans-serif; background: linear-gradient(90deg, #142833 0, #152a35 350px, #1b2931 470px, #28282a 600px, #282a2c 680px, #1f2931 750px, #142833 1000px, #15302f 1420px, #142833 1700px, #142833 100%); }
.weather { position: relative; width: 227.500px; padding-left: 27px; height: 36px; }
.weather span { position: absolute; left: 40px; top: -4px; width: 20px; height: 20px; border-radius: 50%; background: #c42b1c; color: #fff; font-size: 13.500px; line-height: 19px; text-align: center; letter-spacing: -.5px; }
.search { width: 273px; height: 38px; margin: 0 0 1px 17.500px; border-radius: 19px; background: #f1f3f5; display: flex; align-items: center; padding: 0 7px 0 14px; }
.search span { flex: 1; margin-left: 12px; font-size: 16.300px; color: #5c5f63; }
.apps-row { display: flex; margin-left: 3px; height: 59px; padding-bottom: 1px; }
.app { position: relative; width: 55px; display: flex; align-items: center; justify-content: center; }
.help { padding: 0 0 5px 3px; }
.app > i { position: absolute; left: 24px; bottom: 5px; width: 8px; height: 4px; border-radius: 2px; background: #99a0a5; }
.current::before { content: ""; position: absolute; left: 3px; top: 4px; width: 50px; height: 50px; border-radius: 6px; background: rgba(255,255,255,.08); border: 1px solid rgba(255,255,255,.06); }
.current svg { position: relative; }
.current > i { left: 18px; width: 20px; background: #4cc2ff; }
.app .badge { position: absolute; left: 29.500px; top: 8px; width: 20px; height: 20px; border-radius: 50%; font-size: 13px; line-height: 20px; text-align: center; }
.app .blue { background: #4cc2ff; color: #06202e; font-size: 14.500px; }
.app .brown { background: #8d6e63; color: #f1e8e4; }
.tray { display: flex; align-items: center; margin-left: auto; color: #fff; padding: 0 25px 2px 0; }
.tray span { font-size: 14.700px; line-height: 20px; letter-spacing: -.3px; }
.chev { margin-right: 22px; } .cloud { margin-right: 22px; } .mic { margin-right: 25px; }
.lang { width: 30px; text-align: center; margin-right: 21px; }
.wifi { margin-right: 10px; } .vol { margin-right: 9px; } .bat { margin-right: 20px; }
.tray .clock { width: 79px; text-align: right; margin-right: 10px; white-space: nowrap; letter-spacing: 0; }
```
